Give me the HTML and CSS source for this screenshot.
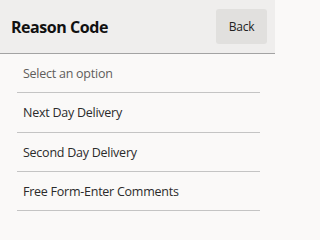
FILE: index.html
```html
<!DOCTYPE html>
<html>
<head>
<meta charset="utf-8">
<link rel="stylesheet" href="styles.css">
</head>
<body>
<div class="panel">
  <header class="header">
    <h1 class="title">Reason Code</h1>
    <button class="back">Back</button>
  </header>
  <ul class="options">
    <li class="option placeholder">Select an option</li>
    <li class="option">Next Day Delivery</li>
    <li class="option">Second Day Delivery</li>
    <li class="option">Free Form-Enter Comments</li>
  </ul>
</div>
</body>
</html>
```

FILE: styles.css
```css
html, body {
  margin: 0;
  padding: 0;
  background: #faf9f8;
  font-family: "Open Sans", "Noto Sans", sans-serif;
}
.panel {
  width: 275px;
  height: 218px;
  overflow: hidden;
}
.header {
  height: 53px;
  box-sizing: content-box;
  border-bottom: 1px solid #a3a3a3;
  background: #efeeed;
  display: flex;
  align-items: center;
  justify-content: space-between;
  padding: 0 8px 0 11px;
}
.title {
  margin: 0;
  font-size: 16px;
  font-weight: 700;
  color: #111;
  letter-spacing: -0.45px;
}
.back {
  width: 51px;
  height: 35px;
  border: none;
  border-radius: 3px;
  background: #e1e0de;
  color: #222;
  font-family: inherit;
  font-size: 12px;
  letter-spacing: -0.2px;
  padding: 0;
}
.options {
  list-style: none;
  margin: 0 15px 0 17px;
  padding: 0;
}
.option {
  height: 37.3px;
  border-bottom: 1px solid #c4c4c4;
  display: flex;
  align-items: center;
  padding: 1px 0 0 6px;
  box-sizing: content-box;
  font-size: 12.5px;
  letter-spacing: -0.25px;
  color: #2b2b2b;
}
.option.placeholder {
  color: #5f5d5b;
}
```
